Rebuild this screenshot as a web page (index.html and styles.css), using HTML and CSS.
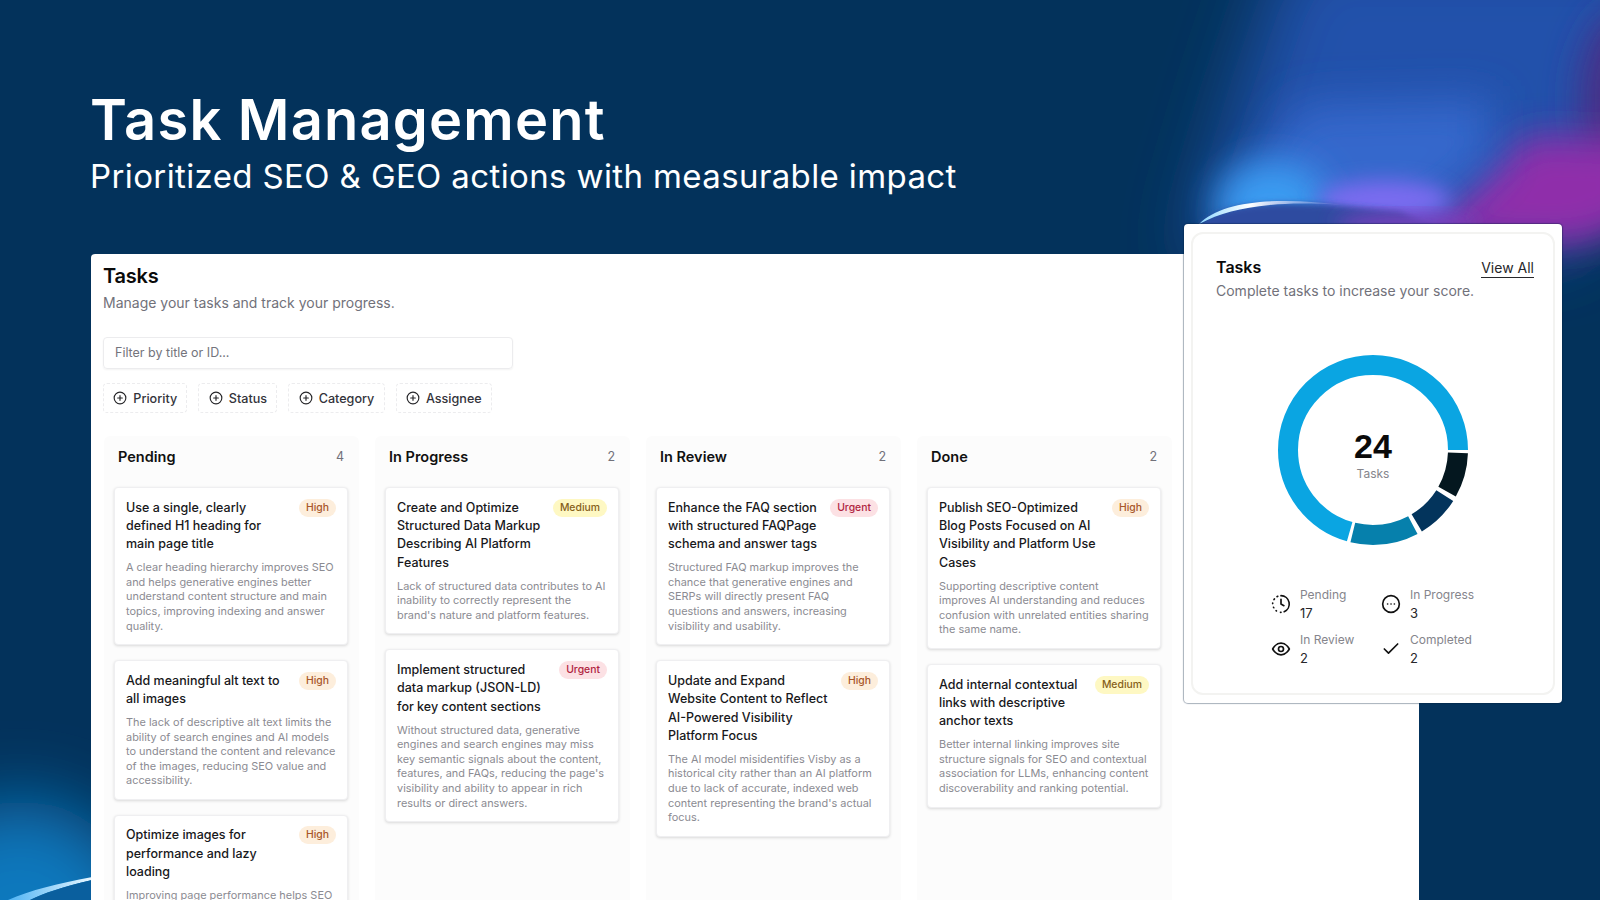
FILE: index.html
```html
<!DOCTYPE html>
<html lang="en">
<head>
<meta charset="utf-8">
<title>Task Management</title>
<link rel="stylesheet" href="styles.css">
</head>
<body>
<div class="page">
  <svg class="decor" viewBox="0 0 1600 900" aria-hidden="true">
    <defs>
      <filter id="b45" x="-50%" y="-50%" width="200%" height="200%"><feGaussianBlur stdDeviation="36"/></filter>
      <filter id="b25" x="-50%" y="-50%" width="200%" height="200%"><feGaussianBlur stdDeviation="22"/></filter>
      <filter id="b16" x="-50%" y="-50%" width="200%" height="200%"><feGaussianBlur stdDeviation="18"/></filter>
      <filter id="b8" x="-50%" y="-50%" width="200%" height="200%"><feGaussianBlur stdDeviation="10"/></filter>
      <filter id="b3" x="-50%" y="-50%" width="200%" height="200%"><feGaussianBlur stdDeviation="3"/></filter>
      <linearGradient id="arc" x1="0" x2="1" y1="0" y2="0">
        <stop offset="0" stop-color="#8fd8ff"/><stop offset=".35" stop-color="#ffffff"/><stop offset="1" stop-color="#c8c8ff" stop-opacity="0"/>
      </linearGradient>
      <linearGradient id="arc2" x1="0" x2="1" y1="0" y2="0">
        <stop offset="0" stop-color="#4fb4f4"/><stop offset="1" stop-color="#e8f6ff"/>
      </linearGradient>
      <clipPath id="topclip"><rect x="900" y="0" width="700" height="400"/></clipPath>
      <clipPath id="leftclip"><rect x="0" y="500" width="91" height="400"/></clipPath>
    </defs>
    <g clip-path="url(#topclip)">
      <path d="M1190 260 L1240 90 L1290 -60 L1680 -60 L1680 110 L1570 250Z" fill="#2151ab" filter="url(#b45)"/>
      <ellipse cx="1625" cy="100" rx="45" ry="90" fill="#4a2f86" filter="url(#b16)"/>
      <path d="M1640 140 L1640 222 L1580 245 L1410 240 L1480 180 L1530 135Z" fill="#8f2eaa" filter="url(#b16)"/>
      <path d="M1225 225 L1300 105 L1490 100 L1490 160 L1425 212 Z" fill="#3468cc" filter="url(#b25)"/>
      <ellipse cx="1272" cy="205" rx="56" ry="44" fill="#3a9cf2" filter="url(#b16)"/>
      <ellipse cx="1385" cy="200" rx="66" ry="20" fill="#7a6cf0" filter="url(#b8)"/>
      <path d="M1199 226 C1215 209 1245 203 1285 203 C1320 203 1360 208 1400 212 L1440 230 L1199 230Z" fill="#2f4ca0" filter="url(#b3)"/>
      <ellipse cx="1405" cy="224" rx="70" ry="9" fill="#8a3cc4" filter="url(#b8)"/>
      <path d="M1199 224 C1215 208 1245 201 1285 201 C1305 201 1325 203 1345 205 C1310 203 1290 203 1270 205 C1240 208 1220 213 1199 224Z" fill="url(#arc)"/>
    </g>
    <g clip-path="url(#leftclip)">
      <ellipse cx="20" cy="950" rx="130" ry="150" fill="#0d78bd" filter="url(#b45)"/>
      <path d="M8 900 C30 890 60 883 92 877 L92 880 C62 887 44 893 30 900Z" fill="url(#arc2)"/>
      <path d="M30 900 C44 893 62 887 92 880 L92 900Z" fill="#0a5f9e"/>
    </g>
  </svg>

  <header class="hero">
    <h1 class="hero-title">Task Management</h1>
    <p class="hero-sub">Prioritized SEO &amp; GEO actions with measurable impact</p>
  </header>

  <main class="panel">
    <h2 class="panel-title">Tasks</h2>
    <p class="panel-sub">Manage your tasks and track your progress.</p>
    <div class="filter-input">Filter by title or ID...</div>
    <div class="chips">
      <span class="chip"><svg class="chip-icon" viewBox="0 0 24 24"><circle cx="12" cy="12" r="10"/><path d="M8 12h8M12 8v8"/></svg>Priority</span>
      <span class="chip"><svg class="chip-icon" viewBox="0 0 24 24"><circle cx="12" cy="12" r="10"/><path d="M8 12h8M12 8v8"/></svg>Status</span>
      <span class="chip"><svg class="chip-icon" viewBox="0 0 24 24"><circle cx="12" cy="12" r="10"/><path d="M8 12h8M12 8v8"/></svg>Category</span>
      <span class="chip"><svg class="chip-icon" viewBox="0 0 24 24"><circle cx="12" cy="12" r="10"/><path d="M8 12h8M12 8v8"/></svg>Assignee</span>
    </div>
    <div class="board">
      <section class="column">
        <div class="col-head"><span class="col-title">Pending</span><span class="col-count">4</span></div>
        <article class="card">
          <div class="card-top"><h3 class="card-title">Use a single, clearly defined H1 heading for main page title</h3><span class="badge high">High</span></div>
          <p class="card-text">A clear heading hierarchy improves SEO and helps generative engines better understand content structure and main topics, improving indexing and answer quality.</p>
        </article>
        <article class="card">
          <div class="card-top"><h3 class="card-title">Add meaningful alt text to all images</h3><span class="badge high">High</span></div>
          <p class="card-text">The lack of descriptive alt text limits the ability of search engines and AI models to understand the content and relevance of the images, reducing SEO value and accessibility.</p>
        </article>
        <article class="card">
          <div class="card-top"><h3 class="card-title">Optimize images for performance and lazy loading</h3><span class="badge high">High</span></div>
          <p class="card-text">Improving page performance helps SEO and the experience of every visitor.</p>
        </article>
      </section>
      <section class="column">
        <div class="col-head"><span class="col-title">In Progress</span><span class="col-count">2</span></div>
        <article class="card">
          <div class="card-top"><h3 class="card-title">Create and Optimize Structured Data Markup Describing AI Platform Features</h3><span class="badge medium">Medium</span></div>
          <p class="card-text">Lack of structured data contributes to AI inability to correctly represent the brand's nature and platform features.</p>
        </article>
        <article class="card">
          <div class="card-top"><h3 class="card-title">Implement structured data markup (JSON-LD) for key content sections</h3><span class="badge urgent">Urgent</span></div>
          <p class="card-text">Without structured data, generative engines and search engines may miss key semantic signals about the content, features, and FAQs, reducing the page's visibility and ability to appear in rich results or direct answers.</p>
        </article>
      </section>
      <section class="column">
        <div class="col-head"><span class="col-title">In Review</span><span class="col-count">2</span></div>
        <article class="card">
          <div class="card-top"><h3 class="card-title">Enhance the FAQ section with structured FAQPage schema and answer tags</h3><span class="badge urgent">Urgent</span></div>
          <p class="card-text">Structured FAQ markup improves the chance that generative engines and SERPs will directly present FAQ questions and answers, increasing visibility and usability.</p>
        </article>
        <article class="card">
          <div class="card-top"><h3 class="card-title">Update and Expand Website Content to Reflect AI-Powered Visibility Platform Focus</h3><span class="badge high">High</span></div>
          <p class="card-text">The AI model misidentifies Visby as a historical city rather than an AI platform due to lack of accurate, indexed web content representing the brand's actual focus.</p>
        </article>
      </section>
      <section class="column">
        <div class="col-head"><span class="col-title">Done</span><span class="col-count">2</span></div>
        <article class="card">
          <div class="card-top"><h3 class="card-title">Publish SEO-Optimized Blog Posts Focused on AI Visibility and Platform Use Cases</h3><span class="badge high">High</span></div>
          <p class="card-text">Supporting descriptive content<br>improves AI understanding and reduces confusion with unrelated entities sharing the same name.</p>
        </article>
        <article class="card">
          <div class="card-top"><h3 class="card-title">Add internal contextual links with descriptive anchor texts</h3><span class="badge medium">Medium</span></div>
          <p class="card-text">Better internal linking improves site structure signals for SEO and contextual association for LLMs, enhancing content discoverability and ranking potential.</p>
        </article>
      </section>
    </div>
  </main>

  <aside class="float">
    <div class="float-inner">
      <div class="float-head">
        <h2 class="float-title">Tasks</h2>
        <span class="float-link">View All</span>
      </div>
      <p class="float-sub">Complete tasks to increase your score.</p>
      <div class="donut">
        <svg class="donut-svg" viewBox="0 0 190 190">
          <circle class="seg seg-done" cx="95" cy="95" r="85" pathLength="360" stroke-dasharray="27.4 332.6" stroke-dashoffset="-2"/>
          <circle class="seg seg-review" cx="95" cy="95" r="85" pathLength="360" stroke-dasharray="26.6 333.4" stroke-dashoffset="-32.4"/>
          <circle class="seg seg-progress" cx="95" cy="95" r="85" pathLength="360" stroke-dasharray="41.8 318.2" stroke-dashoffset="-62"/>
          <circle class="seg seg-pending" cx="95" cy="95" r="85" pathLength="360" stroke-dasharray="254 106" stroke-dashoffset="-106"/>
        </svg>
        <div class="donut-label"><span class="donut-num">24</span><span class="donut-cap">Tasks</span></div>
      </div>
      <div class="legend">
        <div class="legend-item">
          <svg class="legend-icon" viewBox="0 0 24 24"><path d="M12 2a10 10 0 0 1 3.8 19.2"/><path d="M12 22h-.6"/><path d="M6.5 20.3l-.4-.3M3.3 16.5l-.3-.6M2 11.5v-.6M3.6 6.7l.5-.7M7.2 3.2l.9-.5"/><path d="M12 6.5V12l3.5 2"/></svg>
          <div><div class="legend-label">Pending</div><div class="legend-value">17</div></div>
        </div>
        <div class="legend-item">
          <svg class="legend-icon" viewBox="0 0 24 24"><circle cx="12" cy="12" r="10"/><path d="M7.9 12h.1M12 12h.1M16 12h.1"/></svg>
          <div><div class="legend-label">In Progress</div><div class="legend-value">3</div></div>
        </div>
        <div class="legend-item">
          <svg class="legend-icon" viewBox="0 0 24 24"><path d="M2 12s3.6-7 10-7 10 7 10 7-3.6 7-10 7-10-7-10-7Z"/><circle cx="12" cy="12" r="3"/></svg>
          <div><div class="legend-label">In Review</div><div class="legend-value">2</div></div>
        </div>
        <div class="legend-item">
          <svg class="legend-icon" viewBox="0 0 24 24"><path d="M20 6 9 17l-5-5"/></svg>
          <div><div class="legend-label">Completed</div><div class="legend-value">2</div></div>
        </div>
      </div>
    </div>
  </aside>
</div>
</body>
</html>
```
FILE: styles.css
```css
* { box-sizing: border-box; }
html, body { margin: 0; padding: 0; }
body { font-family: "Inter", "Liberation Sans", sans-serif; color: #111; }
h1, h2, h3, p { margin: 0; }

.page {
  position: relative;
  width: 1600px;
  height: 900px;
  overflow: hidden;
  background: #03325b;
  display: flex;
  flex-direction: column;
}
.decor { position: absolute; left: 0; top: 0; width: 1600px; height: 900px; }

.hero { position: relative; padding: 90px 0 0 90px; color: #fff; }
.hero-title { font-size: 56px; line-height: 60px; font-weight: 600; letter-spacing: 1.2px; }
.hero-sub { font-size: 33px; line-height: 40px; margin-top: 6px; font-weight: 400; letter-spacing: 0.38px; }

.panel {
  position: relative;
  margin: 58px 0 0 91px;
  width: 1328px;
  flex: 1;
  min-height: 0;
  overflow: hidden;
  background: #fff;
  border-radius: 4px 0 0 0;
  padding: 10px 0 0 12px;
}
.panel-title { font-size: 20px; line-height: 24px; font-weight: 600; color: #0a0a0a; letter-spacing: -0.2px; }
.panel-sub { font-size: 14px; line-height: 20px; margin-top: 5px; color: #71717a; }
.filter-input {
  margin-top: 24px;
  width: 410px;
  height: 32px;
  border: 1px solid #ececee;
  border-radius: 4px;
  box-shadow: 0 1px 2px rgba(0,0,0,.05);
  padding-left: 11px;
  font-size: 12.5px;
  line-height: 30px;
  color: #74747c;
}
.chips { display: flex; gap: 11px; margin-top: 14px; }
.chip {
  display: flex;
  align-items: center;
  height: 30px;
  gap: 6px;
  padding: 0 9.3px;
  border: 1px dashed #ececee;
  border-radius: 4px;
  font-size: 12.6px;
  font-weight: 500;
  color: #33333a;
}
.chip-icon { width: 14px; height: 14px; fill: none; stroke: #27272a; stroke-width: 2; stroke-linecap: round; }

.board { display: flex; gap: 16px; margin-top: 23px; margin-left: 1px; height: 480px; }
.column { width: 255px; flex: none; background: #fcfcfc; padding: 0 10px; border-radius: 6px 6px 0 0; }
.col-head { display: flex; justify-content: space-between; align-items: center; height: 40px; padding: 0 5px 0 4px; margin-bottom: 11px; }
.col-title { font-size: 14.5px; font-weight: 600; color: #111; }
.col-count { font-size: 12.5px; color: #71717a; }

.card {
  width: 234px;
  background: #fff;
  border: 1px solid #efeff1;
  border-radius: 4px;
  box-shadow: 0 1px 3px rgba(0,0,0,.14);
  padding: 10.5px 11px 11px;
  margin-bottom: 15px;
}
.card-top { display: flex; justify-content: space-between; align-items: flex-start; gap: 10px; }
.card-title { font-size: 12.5px; line-height: 18.4px; font-weight: 500; color: #18181b; }
.card-text { margin-top: 6.5px; font-size: 10.9px; line-height: 14.6px; color: #8b8b92; letter-spacing: 0.02px; }
.badge {
  flex: none;
  height: 18px;
  line-height: 18px;
  padding: 0 7px;
  border-radius: 9px;
  font-size: 10.4px;
  font-weight: 500;
}
.high { background: #fdeedc; color: #a8562a; }
.medium { background: #fef8c3; color: #86601a; }
.urgent { background: #fce1e4; color: #b0243f; }

.float {
  position: absolute;
  left: 1184px;
  top: 224px;
  width: 378px;
  height: 479px;
  background: #fff;
  border-radius: 4px;
  box-shadow: 0 0 1px 1px rgba(0,30,60,.35);
  padding: 8px 7px;
}
.float-inner {
  height: 100%;
  border: 2px solid #f3f3f1;
  border-radius: 12px;
  padding: 21px 19px 0 23px;
}
.float-head { display: flex; justify-content: space-between; align-items: center; height: 24px; }
.float-title { font-size: 16px; font-weight: 600; color: #0a0a0a; }
.float-link { font-size: 14px; color: #27272a; border-bottom: 1px solid #27272a; line-height: 19px; margin-top: 2px; }
.float-sub { font-size: 14px; line-height: 20px; margin-top: 2px; color: #71717a; }
.donut { position: relative; width: 190px; height: 190px; margin: 54px auto 0; left: -2px; }
.donut-svg { display: block; width: 190px; height: 190px; }
.seg { fill: none; stroke-width: 20; }
.seg-done { stroke: #04171f; }
.seg-review { stroke: #03345c; }
.seg-progress { stroke: #0680ac; }
.seg-pending { stroke: #0aa5e2; }
.donut-label { position: absolute; inset: 0; padding-top: 10px; display: flex; flex-direction: column; align-items: center; justify-content: center; }
.donut-num { font-size: 34px; line-height: 36px; font-weight: 700; color: #0a0a0a; font-family: "Liberation Sans", sans-serif; }
.donut-cap { font-size: 12px; line-height: 16px; margin-top: 2px; color: #85858c; }

.legend {
  display: grid;
  grid-template-columns: 110px 110px;
  row-gap: 9px;
  margin: 41px 0 0 55px;
}
.legend-item { display: flex; align-items: center; gap: 9px; }
.legend-icon { width: 20px; height: 20px; flex: none; fill: none; stroke: #111; stroke-width: 2; stroke-linecap: round; stroke-linejoin: round; }
.legend-label { font-size: 12px; line-height: 18px; color: #85858c; }
.legend-value { font-size: 13px; line-height: 18px; color: #27272a; }
```
